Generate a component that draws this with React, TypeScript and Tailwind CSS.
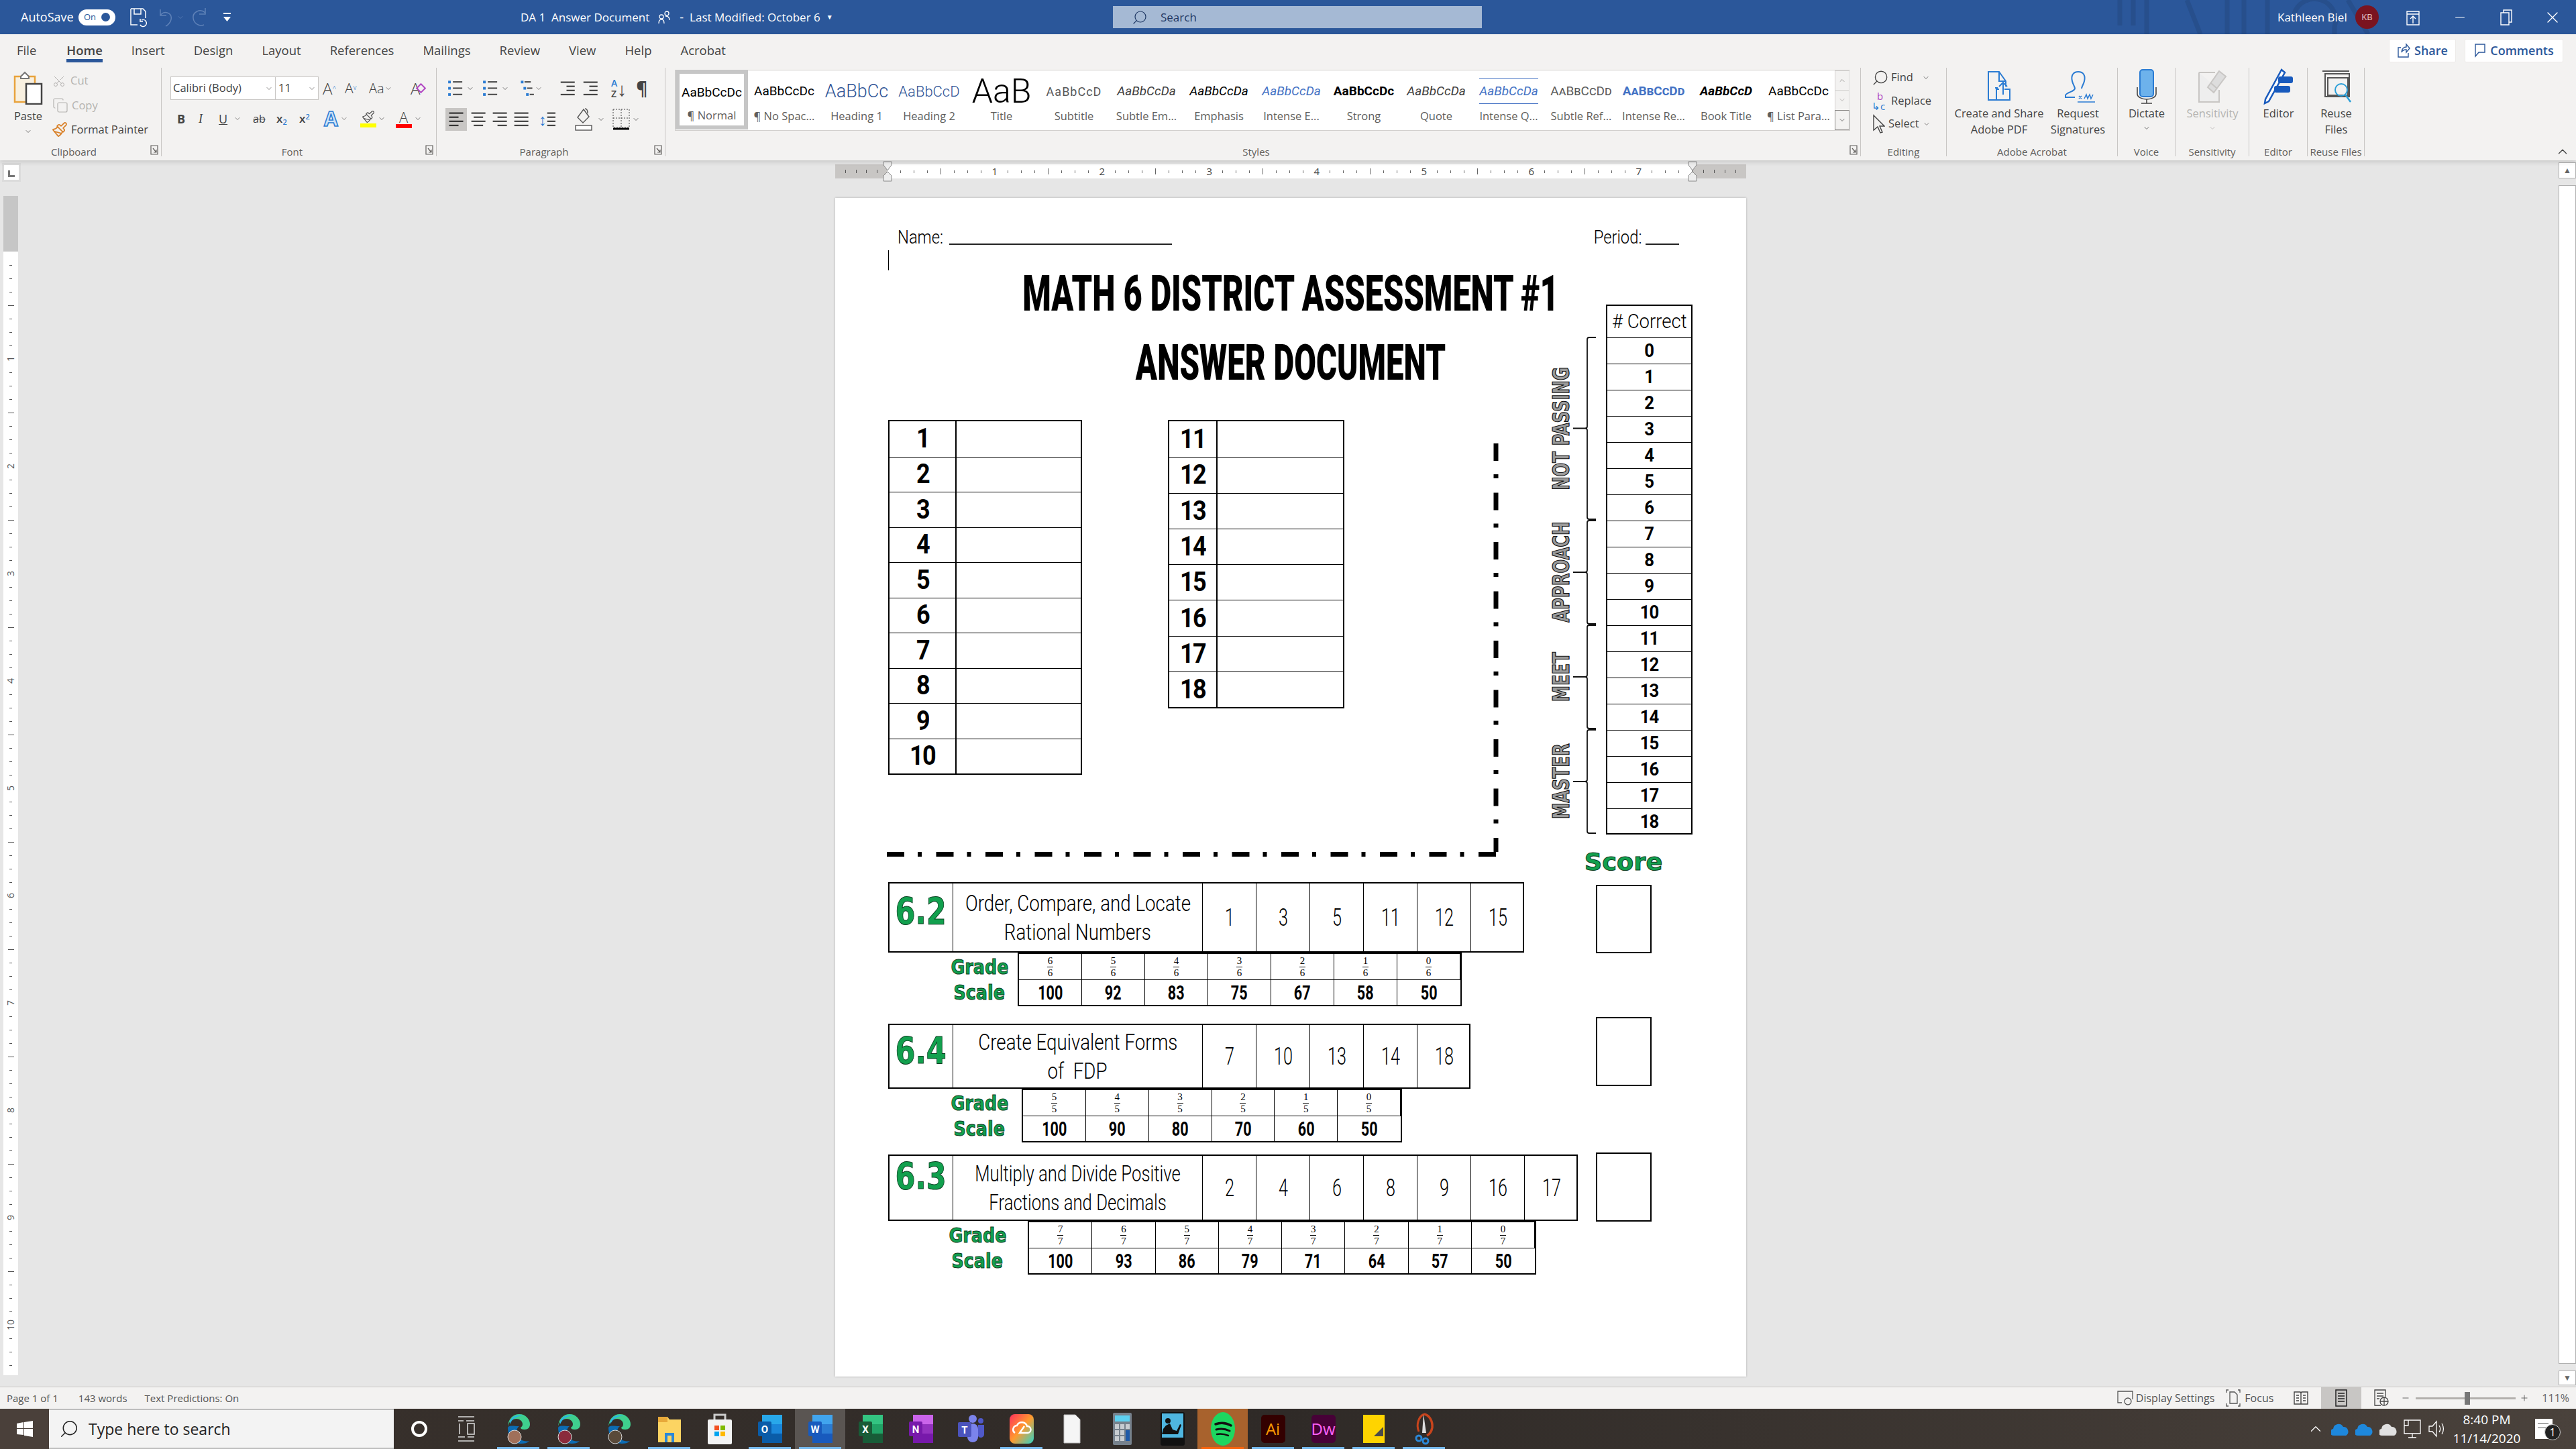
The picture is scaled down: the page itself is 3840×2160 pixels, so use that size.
import React from 'react';
import { ChevronDown, ChevronUp, Search, Scissors, Copy, Paintbrush, Minus, Plus, X } from 'lucide-react';

const Chev = ({ className = 'text-[#605e5c]' }: { className?: string }) => (
  <ChevronDown className={`w-[12px] h-[12px] shrink-0 ${className}`} strokeWidth={1.5} />
);

const Lines = ({ rows, color = '#444' }: { rows: [number, number][]; color?: string }) => (
  <svg width="26" height="28" viewBox="0 0 28 32">
    {rows.map(([x, w], i) => (
      <rect key={i} x={x} y={4 + i * 7} width={w} height="2.5" fill={color} />
    ))}
  </svg>
);

const Bullets = ({ kind }: { kind: 'b' | 'n' | 'm' }) => (
  <svg width="24" height="28" viewBox="0 0 28 36">
    {[3, 15, 27].map((y, i) => (
      <g key={y}>
        <rect x={kind === 'm' ? 3 + i * 5 : 0} y={y} width="5" height="5" fill="#2b7cd3" />
        <rect x={kind === 'm' ? 10 + i * 5 : 9} y={y + 1} width={kind === 'm' ? 12 - i * 2 : 18} height="2.5" fill="#444" />
      </g>
    ))}
  </svg>
);

const Launcher = () => (
  <svg className="absolute right-[3px] bottom-[1px]" width="13" height="17" viewBox="0 0 13 17" fill="none" stroke="#605e5c" strokeWidth="1.2">
    <path d="M1 2h10v13H1zM4 6l5 6M9 8v4H5" />
  </svg>
);

const Group = ({ w, label, launcher, children }: { w: string; label: string; launcher?: boolean; children: React.ReactNode }) => (
  <div className={`${w} relative h-full flex flex-col border-r border-[#c8c6c4] shrink-0`}>
    <div className="flex-1 min-h-0">{children}</div>
    <div className={`h-[20px] leading-[20px] mt-[3px] -mb-[3px] text-center text-[15px] text-[#605e5c] whitespace-nowrap ${launcher ? 'pr-[20px]' : ''}`}>{label}</div>
    {launcher && <Launcher />}
  </div>
);

const BigBtn = ({ w, icon, lines, muted, chev }: { w: string; icon: React.ReactNode; lines: string[]; muted?: boolean; chev?: boolean }) => (
  <div className={`${w} flex flex-col items-center shrink-0 ${muted ? 'text-[#b4b2b0]' : 'text-[#444]'}`}>
    <div className="h-[56px] flex items-center justify-center">{icon}</div>
    {lines.map(l => (
      <div key={l} className="text-[16.5px] leading-[24px] whitespace-nowrap">{l}</div>
    ))}
    {chev && <Chev className="mt-[4px]" />}
  </div>
);

const STYLES: { p: string; l: string; c: string }[] = [
  { p: 'AaBbCcDc', l: '¶ Normal', c: 'text-black text-[19px]' },
  { p: 'AaBbCcDc', l: '¶ No Spac...', c: 'text-black text-[19px]' },
  { p: 'AaBbCc', l: 'Heading 1', c: 'text-[#2f5496] text-[27px] font-light' },
  { p: 'AaBbCcD', l: 'Heading 2', c: 'text-[#2f5496] text-[22px] font-light' },
  { p: 'AaB', l: 'Title', c: 'text-black text-[50px] font-light leading-[60px]' },
  { p: 'AaBbCcD', l: 'Subtitle', c: 'text-[#595959] text-[18px] tracking-[1px]' },
  { p: 'AaBbCcDa', l: 'Subtle Em...', c: 'text-[#404040] text-[19px] italic' },
  { p: 'AaBbCcDa', l: 'Emphasis', c: 'text-black text-[19px] italic' },
  { p: 'AaBbCcDa', l: 'Intense E...', c: 'text-[#4472c4] text-[19px] italic' },
  { p: 'AaBbCcDc', l: 'Strong', c: 'text-black text-[19px] font-bold' },
  { p: 'AaBbCcDa', l: 'Quote', c: 'text-[#404040] text-[19px] italic' },
  { p: 'AaBbCcDa', l: 'Intense Q...', c: 'text-[#4472c4] text-[19px] italic border-y border-[#4472c4] py-[4px]' },
  { p: 'AaBbCcDd', l: 'Subtle Ref...', c: 'text-[#5a5a5a] text-[19px] [font-variant:small-caps]' },
  { p: 'AaBbCcDd', l: 'Intense Re...', c: 'text-[#4472c4] text-[19px] font-bold [font-variant:small-caps]' },
  { p: 'AaBbCcD', l: 'Book Title', c: 'text-black text-[19px] font-bold italic' },
  { p: 'AaBbCcDc', l: '¶ List Para...', c: 'text-black text-[19px]' },
];

const TitleBar = () => (
  <div className="relative h-[51px] bg-[#2b579a] flex items-center text-white text-[18px] overflow-hidden shrink-0">
    <svg className="absolute left-[3150px] top-0" width="400" height="51" viewBox="0 0 400 51" fill="none" stroke="#274f8c" strokeWidth="7">
      <path d="M10 0v38M30 0v38M50 0v51M110 0l20 51M170 0v51M195 0v51M230 0v51M270 20a30 30 0 0 1 60 20v11M350 0l30 51" />
    </svg>
    <span className="ml-[31px] w-[86px]">AutoSave</span>
    <div className="w-[55px] h-[24px] rounded-full bg-white flex items-center justify-between px-[8px] text-[#2b579a] text-[13px]">
      On<span className="w-[13px] h-[13px] rounded-full bg-[#2b579a]" />
    </div>
    <svg className="ml-[21px]" width="26" height="30" viewBox="0 0 26 30" fill="none" stroke="#fff" strokeWidth="1.5">
      <path d="M2 2h18l4 4v10M2 2v24h10M7 2v8h10V2M18 19a5 5 0 1 1-2 7M16 17v4h4" />
    </svg>
    <svg className="ml-[18px]" width="24" height="30" viewBox="0 0 24 30" fill="none" stroke="#5f82b8" strokeWidth="1.5">
      <path d="M2 3v9h9M2 12c6-8 18-4 16 6-1 4-4 8-8 10" />
    </svg>
    <Chev className="ml-[2px] text-[#5f82b8]" />
    <svg className="ml-[9px]" width="28" height="32" viewBox="0 0 28 32" fill="none" stroke="#5f82b8" strokeWidth="1.5">
      <path d="M22 2v9h-9M22 9C14 2 3 8 4 17c1 8 9 13 16 10" />
    </svg>
    <svg className="ml-[20px]" width="13" height="16" viewBox="0 0 13 16" fill="#fff">
      <rect x="1" y="1" width="11" height="2" /><path d="M1 7h11l-5.500 7z" />
    </svg>
    <span className="ml-[431px] whitespace-pre text-[17px]">DA 1  Answer Document</span>
    <svg className="ml-[13px]" width="18" height="22" viewBox="0 0 18 22" fill="none" stroke="#fff" strokeWidth="1.3">
      <circle cx="5" cy="10" r="3" /><circle cx="13" cy="5" r="3" /><path d="M1 20c0-4 2-6 4-6s4 2 4 6M11 9c4 0 6 2 6 6" />
    </svg>
    <span className="ml-[14px]">-</span>
    <span className="ml-[9px] text-[17px]">Last Modified: October 6</span>
    <span className="ml-[9px] text-[10px]">▼</span>
    <div className="absolute left-[1659px] top-[9px] w-[550px] h-[33px] bg-[#a5b9d4] flex items-center text-[#1f3864] text-[17px]">
      <Search className="ml-[28px] w-[24px] h-[24px] -scale-x-100 text-[#1f3864]" strokeWidth={1.2} />
      <span className="ml-[19px]">Search</span>
    </div>
    <div className="absolute left-[3395px] top-0 h-full flex items-center">
      <span className="w-[116px] text-[17px] whitespace-nowrap">Kathleen Biel</span>
      <span className="w-[35px] h-[35px] rounded-full bg-[#7a1420] flex items-center justify-center text-[13px] text-[#e6c5c8]">KB</span>
      <svg className="ml-[40px]" width="22" height="26" viewBox="0 0 22 26" fill="none" stroke="#fff" strokeWidth="1.4">
        <path d="M2 4h18v20H2zM2 8h18M11 22V12M7 15l4-4 4 4" />
      </svg>
      <Minus className="ml-[48px] w-[22px] h-[22px]" strokeWidth={1.2} />
      <svg className="ml-[48px]" width="20" height="28" viewBox="0 0 20 28" fill="none" stroke="#fff" strokeWidth="1.4">
        <path d="M2 7h12v18H2zM6 7V3h12v18h-4" />
      </svg>
      <X className="ml-[45px] w-[28px] h-[28px]" strokeWidth={1.2} />
    </div>
  </div>
);

const TABS = ['File', 'Home', 'Insert', 'Design', 'Layout', 'References', 'Mailings', 'Review', 'View', 'Help', 'Acrobat'];

const Ribbon = () => (
  <div className="relative h-[188px] bg-[#f3f2f1] flex flex-col text-[#444] shrink-0 z-10 shadow-[0_3px_6px_rgba(0,0,0,0.12)]">
    <div className="h-[48px] flex items-center pl-[25px] gap-[43px] text-[18.5px] text-[#444]">
      {TABS.map(t => (
        <span key={t} className={`relative whitespace-nowrap ${t === 'Home' ? 'font-semibold ml-[2px]' : ''}`}>
          {t}
          {t === 'Home' && <span className="absolute left-0 right-0 top-[27px] h-[5px] bg-[#2b579a]" />}
        </span>
      ))}
      <div className="ml-auto flex items-center gap-[13px] pr-[19px] text-[#2b579a] text-[18px] font-semibold">
        <div className="w-[100px] h-[35px] bg-white rounded-[2px] border border-[#edebe9] flex items-center justify-center gap-[6px]">
          <svg width="20" height="24" viewBox="0 0 20 24" fill="none" stroke="#2b579a" strokeWidth="1.4"><path d="M6 8H2v14h15v-6M7 15c0-6 4-8 7-8V3l5 6-5 6v-4c-3 0-6 1-7 4z" /></svg>
          Share
        </div>
        <div className="w-[147px] h-[35px] bg-white rounded-[2px] border border-[#edebe9] flex items-center justify-center gap-[6px]">
          <svg width="18" height="24" viewBox="0 0 18 24" fill="none" stroke="#2b579a" strokeWidth="1.4"><path d="M2 3h14v12H7l-5 6z" /></svg>
          Comments
        </div>
      </div>
    </div>
    <div className="h-[134px] pt-[2px] flex">
      <Group w="w-[241px]" label="Clipboard" launcher>
        <div className="flex h-full">
          <div className="w-[78px] flex flex-col items-center pl-[6px]">
            <svg className="mt-[5px]" width="46" height="50" viewBox="0 0 46 50" fill="none">
              <path d="M3 8h30v38H3z" stroke="#e8a33d" strokeWidth="2.500" fill="#f8f0e0" />
              <path d="M12 8l6-6 6 6v3H12z" stroke="#777" strokeWidth="2" fill="#fff" />
              <rect x="20" y="19" width="23" height="30" fill="#fff" stroke="#444" strokeWidth="2.500" />
            </svg>
            <span className="text-[16.5px] leading-[22px] mt-[6px]">Paste</span>
            <Chev className="mt-[6px]" />
          </div>
          <div className="flex flex-col text-[16.5px] whitespace-nowrap">
            <div className="h-[37px] mt-[1px] flex items-center gap-[7px] text-[#b4b2b0]"><Scissors className="w-[20px] h-[26px] -rotate-90" strokeWidth={1.2} />Cut</div>
            <div className="h-[36px] flex items-center gap-[5px] text-[#b4b2b0]"><Copy className="w-[24px] h-[26px]" strokeWidth={1.2} />Copy</div>
            <div className="h-[36px] flex items-center gap-[5px] -ml-[1px]"><Paintbrush className="w-[24px] h-[28px] text-[#d9822b]" strokeWidth={1.8} />Format Painter</div>
          </div>
        </div>
      </Group>
      <Group w="w-[410px]" label="Font" launcher>
        <div className="pl-[13px] pt-[13px]">
          <div className="flex items-center h-[35px]">
            <div className="w-[157px] h-[35px] bg-white border border-[#c8c6c4] flex items-center justify-between pl-[3px] pr-[3px] text-[16.5px] whitespace-nowrap">Calibri (Body)<Chev /></div>
            <div className="w-[64px] h-[35px] bg-white border border-l-0 border-[#c8c6c4] flex items-center justify-between pl-[4px] pr-[3px] text-[16.5px]">11<Chev /></div>
            <span className="ml-[6px] w-[33px] text-[24px] font-light">A<sup className="text-[10px] text-[#2b7cd3]">^</sup></span>
            <span className="w-[36px] text-[21px] font-light">A<sup className="text-[10px] text-[#2b7cd3]">v</sup></span>
            <span className="w-[38px] text-[20px] font-light flex items-center">Aa<Chev /></span>
            <span className="ml-[24px] text-[24px] font-light relative">A<span className="absolute left-[10px] top-[12px] w-[11px] h-[11px] rotate-45 border-2 border-[#b146c2]" /></span>
          </div>
          <div className="flex items-center h-[36px] mt-[10px] text-[18px]">
            <span className="ml-[10px] w-[32px] font-bold">B</span>
            <span className="w-[30px] italic [font-family:'Liberation_Serif',serif]">I</span>
            <span className="w-[22px] underline">U</span>
            <Chev />
            <span className="ml-[17px] w-[35px] line-through text-[16px]">ab</span>
            <span className="w-[34px] text-[17px] font-semibold">x<sub className="text-[11px] text-[#2b7cd3]">2</sub></span>
            <span className="w-[37px] text-[17px] font-semibold">x<sup className="text-[11px] text-[#2b7cd3]">2</sup></span>
            <span className="text-[30px] leading-[30px] font-bold text-[#cfe4f7] [-webkit-text-stroke:1.5px_#2b7cd3]">A</span>
            <Chev className="ml-[3px] text-[#605e5c]" />
            <div className="ml-[18px] w-[24px] flex flex-col items-center">
              <Paintbrush className="w-[20px] h-[20px] text-[#555]" strokeWidth={1.5} />
              <span className="w-[24px] h-[6px] bg-[#ffff00]" />
            </div>
            <Chev className="ml-[2px]" />
            <div className="ml-[15px] w-[24px] flex flex-col items-center leading-[22px]">
              <span className="text-[22px] font-light">A</span>
              <span className="w-[24px] h-[6px] bg-[#f00]" />
            </div>
            <Chev className="ml-[3px]" />
          </div>
        </div>
      </Group>
      <Group w="w-[341px]" label="Paragraph" launcher>
        <div className="pl-[16px] pt-[13px]">
          <div className="flex items-center h-[36px]">
            <Bullets kind="b" /><Chev className="ml-[4px]" />
            <span className="ml-[12px]"><Bullets kind="n" /></span><Chev className="ml-[4px]" />
            <span className="ml-[14px]"><Bullets kind="m" /></span><Chev />
            <span className="ml-[26px]"><Lines rows={[[0, 24], [10, 14], [10, 14], [0, 24]]} /></span>
            <span className="ml-[8px]"><Lines rows={[[0, 24], [10, 14], [10, 14], [0, 24]]} /></span>
            <span className="ml-[16px] text-[14px] leading-[16px] text-[#2b7cd3] font-semibold">A<br /><span className="text-[#444]">Z</span></span>
            <span className="text-[28px] font-light leading-[28px]">↓</span>
            <span className="ml-[14px] text-[26px] font-bold leading-[28px]">¶</span>
          </div>
          <div className="flex items-center h-[36px] mt-[10px] -ml-[3px]">
            <span className="w-[32px] h-[34px] bg-[#c8c6c4] flex items-center justify-center"><Lines rows={[[2, 24], [2, 16], [2, 24], [2, 16]]} color="#333" /></span>
            <span className="ml-[5px]"><Lines rows={[[1, 24], [5, 16], [1, 24], [5, 16]]} /></span>
            <span className="ml-[6px]"><Lines rows={[[1, 24], [9, 16], [1, 24], [9, 16]]} /></span>
            <span className="ml-[6px]"><Lines rows={[[1, 24], [1, 24], [1, 24], [1, 24]]} /></span>
            <span className="ml-[12px] flex items-center"><span className="text-[#2b7cd3] text-[24px] font-light leading-[30px]">↕</span><Lines rows={[[0, 14], [0, 14], [0, 14], [0, 14]]} /></span>
            <svg className="ml-[15px]" width="28" height="36" viewBox="0 0 28 36" fill="none" stroke="#555" strokeWidth="1.4">
              <path d="M14 3L5 15l8 8 9-9zM16 2c3 0 4 3 4 7" /><rect x="2" y="27" width="24" height="7" fill="#fff" />
            </svg>
            <Chev className="ml-[6px]" />
            <svg className="ml-[10px]" width="28" height="36" viewBox="0 0 28 36" fill="none" stroke="#444" strokeWidth="1" strokeDasharray="2 2">
              <path d="M2 3h24v27H2zM14 3v27M2 16h24" /><path d="M2 32h24" strokeDasharray="0" strokeWidth="3" stroke="#000" />
            </svg>
            <Chev className="ml-[2px]" />
          </div>
        </div>
      </Group>
      <Group w="w-[1782px]" label="Styles" launcher>
        <div className="pl-[14px] pt-[3px]">
          <div className="flex w-[1752px] h-[91px] bg-white border-y border-l border-[#d2d0ce]">
            {STYLES.map((s, i) => (
              <div key={s.l} className={`w-[108px] shrink-0 h-full flex flex-col items-center overflow-hidden ${i === 0 ? 'border-[6px] border-[#c6c6c6] -mt-[1px] h-[91px]' : ''}`}>
                <div className={`w-[96px] flex items-center justify-center overflow-hidden whitespace-nowrap [font-family:'Roboto',sans-serif] ${i === 0 ? 'h-[50px] pt-[6px]' : 'h-[56px] pt-[6px]'}`}>
                  <span className={s.c}>{s.p}</span>
                </div>
                <span className="text-[16.5px] text-[#605e5c] whitespace-nowrap">{s.l}</span>
              </div>
            ))}
            <div className="w-[22px] flex flex-col text-[#a19f9d] text-[10px] bg-[#f3f2f1]">
              <div className="flex-1 flex items-center justify-center border border-[#d2d0ce]"><ChevronUp className="w-[12px] h-[12px]" /></div>
              <div className="flex-1 flex items-center justify-center border-x border-[#d2d0ce]"><Chev className="text-[#a19f9d]" /></div>
              <div className="flex-1 flex items-center justify-center border border-[#8a8886] text-[#444]"><Chev className="text-[#444]" /></div>
            </div>
          </div>
        </div>
      </Group>
      <Group w="w-[128px]" label="Editing">
        <div className="flex flex-col pl-[16px] -mt-[3px] text-[16.5px] whitespace-nowrap">
          <div className="h-[35px] flex items-center gap-[3px]"><Search className="w-[26px] h-[32px] -scale-x-100" strokeWidth={1.2} />Find<Chev className="ml-[10px]" /></div>
          <div className="h-[35px] flex items-center gap-[5px]"><span className="w-[24px] text-[15px] leading-[15px] text-[#2b7cd3]"><span className="text-[#b146c2] pl-[8px]">b</span><br />↳c</span>Replace</div>
          <div className="h-[33px] flex items-center gap-[5px]">
            <svg width="20" height="30" viewBox="0 0 20 30" fill="none" stroke="#444" strokeWidth="1.4"><path d="M3 2v22l6-5 4 9 3-1-4-9h7z" /></svg>
            Select<Chev />
          </div>
        </div>
      </Group>
      <Group w="w-[255px]" label="Adobe Acrobat">
        <div className="flex pl-[8px]">
          <BigBtn w="w-[140px]" lines={['Create and Share', 'Adobe PDF']} icon={
            <svg width="36" height="48" viewBox="0 0 36 48" fill="none" stroke="#2b7cd3" strokeWidth="2"><path d="M14 44H2V2h16l10 14v8M18 2v14h10M12 26h4M24 36V18M18 24l6-6 6 6M26 28h8v16H14V28h4" /></svg>
          } />
          <BigBtn w="w-[95px]" lines={['Request', 'Signatures']} icon={
            <svg width="50" height="48" viewBox="0 0 50 48" fill="none" stroke="#2b7cd3" strokeWidth="2"><path d="M25 2c-8 0-11 6-9 14 1 5 4 8 4 11-1 5-12 5-14 10v3h14M25 2c8 0 11 6 9 14-1 5-4 8-4 11" /><path d="M26 38l4 4m0-4l-4 4M34 42l3-6 2 6 3-6 2 6 3-6M24 47h26" strokeWidth="1.5" /></svg>
          } />
        </div>
      </Group>
      <Group w="w-[86px]" label="Voice">
        <BigBtn w="w-[86px]" chev lines={['Dictate']} icon={
          <svg width="30" height="54" viewBox="0 0 30 54" fill="none" stroke="#444" strokeWidth="1.6"><rect x="5" y="2" width="20" height="40" rx="4" fill="#6db2ec" stroke="#2b7cd3" strokeWidth="2" /><path d="M1 28v10a14 8 0 0 0 28 0V28M15 46v6M7 52h16" /></svg>
        } />
      </Group>
      <Group w="w-[110px]" label="Sensitivity">
        <BigBtn w="w-[110px]" muted chev lines={['Sensitivity']} icon={
          <svg width="44" height="50" viewBox="0 0 44 50" fill="none" stroke="#c8c6c4" strokeWidth="2"><path d="M2 4h24M2 4v44h30V30" fill="#eee" /><path d="M32 2l10 8-18 24-9-8zM20 20l9 8" fill="#ddd" /></svg>
        } />
      </Group>
      <Group w="w-[87px]" label="Editor">
        <BigBtn w="w-[87px]" lines={['Editor']} icon={
          <svg width="46" height="54" viewBox="0 0 46 54" fill="none"><path d="M27 2L3 46l-1 6 6-3L32 6z" stroke="#185abd" strokeWidth="2.500" fill="#fff" /><rect x="22" y="12" width="22" height="10" rx="3" fill="#185abd" /><rect x="16" y="26" width="24" height="10" rx="3" fill="#185abd" /></svg>
        } />
      </Group>
      <Group w="w-[85px]" label="Reuse Files">
        <BigBtn w="w-[85px]" lines={['Reuse', 'Files']} icon={
          <svg width="46" height="50" viewBox="0 0 46 50" fill="none" stroke="#555" strokeWidth="2"><path d="M2 2h40M6 6h36v34H6zM10 12h30v26H10z" /><circle cx="30" cy="30" r="9" stroke="#2b9fd8" /><path d="M36 37l8 11" stroke="#2b9fd8" strokeWidth="2.500" /></svg>
        } />
      </Group>
    </div>
    <ChevronUp className="absolute right-[9px] bottom-[2px] w-[22px] h-[22px] text-[#444]" strokeWidth={1.5} />
  </div>
);

const RulerMark = ({ left }: { left: string }) => (
  <svg className={`absolute ${left} -top-[5px]`} width="14" height="32" viewBox="0 0 14 32" fill="#eee" stroke="#888" strokeWidth="1">
    <path d="M1 1h12v5L7 14 1 6zM7 16l6 6v8H1v-8z" />
  </svg>
);

const HRuler = () => (
  <div className="relative flex ml-[1245px] w-[1358px] h-[21px] mt-[6px] bg-[#c8c6c4] text-[#444] text-[15px]">
    <div className="w-[78px] flex items-center justify-around px-[8px]">
      {[0, 1, 2, 3].map(i => <span key={i} className="w-[1px] h-[5px] bg-[#555]" />)}
    </div>
    <div className="w-[1200px] bg-white flex items-center">
      {Array.from({ length: 60 }).map((_, i) => {
        const n = i + 1;
        return (
          <div key={i} className="w-[20px] flex justify-end items-center">
            {n % 8 === 0 && n < 60 ? <span className="translate-x-[4px] leading-none">{n / 8}</span>
              : n % 4 === 0 ? <span className="w-[1px] h-[9px] bg-[#666]" />
              : <span className="w-[1px] h-[4px] bg-[#666]" />}
          </div>
        );
      })}
    </div>
    <div className="w-[80px] flex items-center justify-around px-[8px]">
      {[0, 1, 2, 3].map(i => <span key={i} className="w-[1px] h-[5px] bg-[#555]" />)}
    </div>
    <RulerMark left="left-[71px]" />
    <RulerMark left="left-[1271px]" />
  </div>
);

const VRuler = () => (
  <div className="w-[22px] ml-[5px] mt-[22px] h-[1758px] flex flex-col shrink-0">
    <div className="h-[83px] bg-[#c6c6c6] shrink-0" />
    <div className="flex-1 bg-white flex flex-col items-center overflow-hidden text-[14px] text-[#555] pt-[10px]">
      {Array.from({ length: 84 }).map((_, i) => {
        const n = i + 1;
        return (
          <div key={i} className="h-[20px] shrink-0 flex items-center justify-center">
            {n % 8 === 0 ? <span className="-rotate-90 leading-none">{n / 8}</span>
              : n % 4 === 0 ? <span className="w-[9px] h-[1px] bg-[#555]" />
              : <span className="w-[4px] h-[1px] bg-[#555]" />}
          </div>
        );
      })}
    </div>
  </div>
);

const BOLD = "[font-family:'Roboto',sans-serif] font-bold text-black";
const THIN = "[font-family:'Roboto',sans-serif] font-light text-black";

const AnswerTable = ({ from, to, col, w, rowH }: { from: number; to: number; col: string; w: string; rowH: string }) => (
  <div className={`${w} border-2 border-black shrink-0`}>
    {Array.from({ length: to - from + 1 }).map((_, i) => (
      <div key={i} className={`${rowH} flex ${i ? 'border-t border-black' : ''}`}>
        <div className={`${col} shrink-0 border-r-2 border-black flex items-center justify-center ${BOLD} text-[40px]`}>
          <span className="inline-block scale-x-[0.9] tracking-[-2px]">{from + i}</span>
        </div>
        <div className="flex-1" />
      </div>
    ))}
  </div>
);

const GROUPS = [
  { label: 'NOT PASSING', h: 'h-[273px]', bh: 273 },
  { label: 'APPROACH', h: 'h-[156px]', bh: 156 },
  { label: 'MEET', h: 'h-[156px]', bh: 156 },
  { label: 'MASTER', h: 'h-[156px]', bh: 156 },
];

const CorrectChart = () => (
  <div className="flex justify-end">
    <div className="flex flex-col pt-[48px]">
      {GROUPS.map(g => (
        <div key={g.label} className={`${g.h} flex items-center`}>
          <span className="[writing-mode:vertical-rl] rotate-180 [font-family:'DejaVu_Sans',sans-serif] font-bold text-[#9a9a9a] [-webkit-text-stroke:1.2px_#111] text-[33px] font-stretch-condensed scale-y-[0.82] whitespace-nowrap w-[33px] leading-[33px]">{g.label}</span>
          <svg width="36" height={g.bh} viewBox={`0 0 36 ${g.bh}`} fill="none" stroke="#111" strokeWidth="1.8">
            <path d={`M35 1H25q-3 0-3 3V${g.bh / 2 - 3}q0 3-3 3H1h18q3 0 3 3V${g.bh - 4}q0 3 3 3H35`} />
          </svg>
        </div>
      ))}
    </div>
    <div className="ml-[14px] w-[129px] border-2 border-black h-[790px]">
      <div className="h-[47px] flex items-center justify-center text-[29px] [font-family:'Roboto',sans-serif] font-light text-black whitespace-nowrap">
        <span className="inline-block scale-x-[0.95]"># Correct</span>
      </div>
      {Array.from({ length: 19 }).map((_, i) => (
        <div key={i} className={`h-[39px] border-t border-black flex items-center justify-center ${BOLD} text-[27px]`}>
          <span className="inline-block scale-x-[0.95] tracking-[-1px]">{i}</span>
        </div>
      ))}
    </div>
  </div>
);

const GREEN = "[font-family:'DejaVu_Sans',sans-serif] font-bold text-[#12a04e] [-webkit-text-stroke:1px_#0a3d20]";

type Sec = {
  code: string; t1: string; t2: string; cells: number[]; rowW: string; rowH: string; boxMt: string; pt: string; codePt: string; titleScale: string;
  den: number; scale: number[]; gradeW: string; gridCols: string; labelMl: string; tableMl: string; sectionMt: string; boxH: string;
};

const SECTIONS: Sec[] = [
  { code: '6.2', t1: 'Order, Compare, and Locate', t2: 'Rational Numbers', cells: [1, 3, 5, 11, 12, 15], rowW: 'w-[948px]', rowH: 'h-[105px]', pt: 'pt-0', codePt: 'pt-[13px]', titleScale: 'scale-x-[0.84]', boxMt: 'mt-[4px]', den: 6, scale: [100, 92, 83, 75, 67, 58, 50], gradeW: 'w-[662px]', gridCols: 'grid-cols-7', labelMl: 'ml-[76px]', tableMl: '-ml-[3px]', sectionMt: 'mt-0', boxH: 'h-[102px]' },
  { code: '6.4', t1: 'Create Equivalent Forms', t2: 'of  FDP', cells: [7, 10, 13, 14, 18], rowW: 'w-[868px]', rowH: 'h-[97px]', pt: 'pt-[10px]', codePt: 'pt-[10px]', titleScale: 'scale-x-[0.84]', boxMt: 'mt-0', den: 5, scale: [100, 90, 80, 70, 60, 50], gradeW: 'w-[567px]', gridCols: 'grid-cols-6', labelMl: 'ml-[76px]', tableMl: 'ml-[3px]', sectionMt: 'mt-[16px]', boxH: 'h-[103px]' },
  { code: '6.3', t1: 'Multiply and Divide Positive', t2: 'Fractions and Decimals', cells: [2, 4, 6, 8, 9, 16, 17], rowW: 'w-[1028px]', rowH: 'h-[99px]', pt: 'pt-[3px]', codePt: 'pt-[2px]', titleScale: 'scale-x-[0.78]', boxMt: 'mt-0', den: 7, scale: [100, 93, 86, 79, 71, 64, 57, 50], gradeW: 'w-[758px]', gridCols: 'grid-cols-8', labelMl: 'ml-[73px]', tableMl: 'ml-[15px]', sectionMt: 'mt-[15px]', boxH: 'h-[103px]' },
];

const Section = ({ s }: { s: Sec }) => (
  <div className={`flex ${s.sectionMt}`}>
    <div className={`w-[1055px] shrink-0 ${s.pt}`}>
      <div className={`${s.rowW} ${s.rowH} flex border-2 border-black`}>
        <div className={`w-[95px] shrink-0 border-r border-black flex justify-center ${s.codePt} ${GREEN} text-[56px] leading-[56px]`}>
          <span className="inline-block scale-x-[0.77] whitespace-nowrap">{s.code}</span>
        </div>
        <div className={`w-[371px] shrink-0 flex flex-col items-center justify-center ${THIN} text-[33px] leading-[43px] whitespace-pre`}>
          <span className={`inline-block ${s.titleScale}`}>{s.t1}</span>
          <span className={`inline-block ${s.titleScale}`}>{s.t2}</span>
        </div>
        {s.cells.map(c => (
          <div key={c} className={`w-[80px] shrink-0 border-l border-black flex items-center justify-center ${THIN} text-[36px]`}>
            <span className="inline-block scale-x-[0.7]">{c}</span>
          </div>
        ))}
      </div>
      <div className="flex">
        <div className={`${s.labelMl} w-[120px] shrink-0 flex flex-col items-center ${GREEN} text-[31px] pt-[2px]`}>
          <span className="h-[38px] leading-[38px] inline-block scale-x-[0.82]">Grade</span>
          <span className="h-[39px] leading-[39px] inline-block scale-x-[0.82]">Scale</span>
        </div>
        <div className={`${s.tableMl} ${s.gradeW} grid ${s.gridCols} border-2 border-black`}>
          {s.scale.map((_, i) => {
            const num = s.den - i;
            return (
              <div key={i} className="h-[38px] border-r border-black last:border-r-0 flex flex-col items-center justify-center [font-family:'Liberation_Serif',serif] text-[15px] leading-[15px] text-black">
                <span>{num}</span>
                <span className="w-[9px] h-[1px] bg-black my-[1px]" />
                <span>{s.den}</span>
              </div>
            );
          })}
          {s.scale.map((v, i) => (
            <div key={v} className={`h-[38px] border-t border-black ${i < s.scale.length - 1 ? 'border-r' : ''} flex items-center justify-center ${BOLD} text-[30px]`}>
              <span className="inline-block scale-x-[0.72]">{v}</span>
            </div>
          ))}
        </div>
      </div>
    </div>
    <div className={`w-[83px] ${s.boxH} ${s.boxMt} border-2 border-black shrink-0`} />
  </div>
);

const VDash = () => (
  <svg width="8" height="609" viewBox="0 0 8 609">
    <line x1="4" y1="0" x2="4" y2="609" stroke="#000" strokeWidth="7" strokeDasharray="26 20 6 21.5" />
  </svg>
);

const HDash = () => (
  <svg className="-ml-[2px] block" width="912" height="7" viewBox="0 0 912 7">
    <line x1="0" y1="3.500" x2="912" y2="3.500" stroke="#000" strokeWidth="7" strokeDasharray="26 20 6 21.5" />
  </svg>
);

const Page = () => (
  <div className="ml-[1245px] mt-[29px] w-[1358px] h-[1757px] bg-white pl-[79px] pr-[80px] pt-[40px] shadow-[0_0_3px_rgba(0,0,0,0.25)] [font-family:'Roboto',sans-serif] text-black">
    <div className="flex justify-between h-[38px] text-[27px] font-light pl-[14px] pr-[20px]">
      <div className="flex items-end whitespace-nowrap">
        <span className="inline-block origin-left scale-x-[0.88] leading-[38px]">Name:</span>
        <span className="w-[332px] h-[2px] bg-[#222] mb-[8px]" />
      </div>
      <div className="flex items-end whitespace-nowrap">
        <span className="inline-block origin-right scale-x-[0.88] leading-[38px]">Period:</span>
        <span className="w-[50px] h-[2px] bg-[#222] mb-[8px] ml-[6px]" />
      </div>
    </div>
    <div className="flex h-[942px]">
      <div className="w-[966px] shrink-0">
        <div className="relative w-[1200px] h-[253px] pt-[13px] text-center font-black text-[75px] leading-[103px] whitespace-nowrap">
          <span className="absolute left-0 top-0 w-[1px] h-[30px] bg-black" />
          <div className="w-[1400px] -ml-[100px] scale-x-[0.648]">MATH 6 DISTRICT ASSESSMENT #1</div>
          <div className="w-[1400px] -ml-[100px] scale-x-[0.632]">ANSWER DOCUMENT</div>
        </div>
        <div className="flex items-start h-[644px]">
          <AnswerTable from={1} to={10} w="w-[289px]" col="w-[100px]" rowH="h-[52.500px]" />
          <div className="ml-[128px]">
            <AnswerTable from={11} to={18} w="w-[263px]" col="w-[72px]" rowH="h-[53.300px]" />
          </div>
          <div className="ml-[222px] mt-[35px]"><VDash /></div>
        </div>
        <HDash />
      </div>
      <div className="flex-1 flex flex-col pt-[81px]">
        <CorrectChart />
        <div className={`mt-[23px] ml-[73px] w-[114px] flex justify-center ${GREEN} text-[36px] leading-[36px]`}>
          <span className="inline-block scale-x-[1.02]">Score</span>
        </div>
      </div>
    </div>
    {SECTIONS.map(s => <Section key={s.code} s={s} />)}
  </div>
);

const Scrollbar = () => (
  <div className="absolute right-0 top-[3px] bottom-[2px] w-[26px] flex flex-col text-[#666]">
    <div className="h-[24px] bg-white border border-[#b0b0b0] flex items-center justify-center text-[12px]">▲</div>
    <div className="h-[10px]" />
    <div className="flex-1 bg-white border border-[#b0b0b0]" />
    <div className="h-[10px]" />
    <div className="h-[22px] bg-white border border-[#b0b0b0] flex items-center justify-center text-[12px]">▼</div>
  </div>
);

function VRulerSpacer() {
  return (
    <div className="relative z-10 pt-[31px]">
      <VRuler />
    </div>
  );
}

const Document = () => (
  <div className="relative flex-1 min-h-0 bg-[#e6e6e6] overflow-hidden">
    <div className="absolute left-[3px] top-[4px] w-[28px] h-[28px] bg-white border-[3px] border-[#dcdcdc] flex items-end justify-center pb-[4px]">
      <span className="w-[10px] h-[10px] border-l-[3px] border-b-[3px] border-[#777]" />
    </div>
    <div className="flex">
      <div className="w-[27px] shrink-0"><VRulerSpacer /></div>
      <div className="flex-1 -ml-[27px]">
        <HRuler />
        <Page />
      </div>
    </div>
    <Scrollbar />
  </div>
);

const StatusBar = () => (
  <div className="h-[33px] bg-[#f3f2f1] border-t border-[#c8c6c4] flex items-center text-[15px] text-[#555] shrink-0 whitespace-nowrap">
    <span className="ml-[10px]">Page 1 of 1</span>
    <span className="ml-[30px]">143 words</span>
    <span className="ml-[26px]">Text Predictions: On</span>
    <div className="ml-auto flex items-center h-full">
      <svg width="26" height="26" viewBox="0 0 26 26" fill="none" stroke="#555" strokeWidth="1.3"><path d="M8 20H2V3h22v12" /><circle cx="17" cy="18" r="5" /></svg>
      <span className="ml-[3px] text-[16px]">Display Settings</span>
      <svg className="ml-[16px]" width="24" height="28" viewBox="0 0 24 28" fill="none" stroke="#555" strokeWidth="1.3"><path d="M5 2H2v4M19 2h3v4M5 26H2v-4M19 26h3v-4M7 5h7l4 4v13H7z" /></svg>
      <span className="ml-[5px] text-[16px]">Focus</span>
      <svg className="ml-[30px]" width="22" height="24" viewBox="0 0 22 24" fill="none" stroke="#444" strokeWidth="1.4"><path d="M1 3h9l1 2 1-2h9v18H1zM11 5v16M4 8h4M4 12h4M4 16h4M14 8h4M14 12h4M14 16h4" /></svg>
      <div className="ml-[19px] w-[60px] h-full bg-[#c8c6c4] flex items-center justify-center">
        <svg width="18" height="26" viewBox="0 0 18 26" fill="none" stroke="#222" strokeWidth="1.5"><path d="M1 1h16v24H1zM4 6h10M4 10h10M4 14h10M4 18h10" /></svg>
      </div>
      <svg className="ml-[19px]" width="22" height="26" viewBox="0 0 22 26" fill="none" stroke="#444" strokeWidth="1.3"><path d="M10 24H1V1h16v10M4 6h10M4 10h10M4 14h4" /><circle cx="15" cy="18" r="6" /><path d="M9 18h12M15 12v12" /></svg>
      <Minus className="ml-[18px] w-[14px] h-[14px]" strokeWidth={1.5} />
      <div className="ml-[8px] w-[149px] h-[3px] bg-[#b3b0ad] relative">
        <span className="absolute left-[73px] -top-[8px] w-[8px] h-[19px] bg-[#777]" />
      </div>
      <Plus className="ml-[6px] w-[14px] h-[14px]" strokeWidth={1.5} />
      <span className="ml-[19px] mr-[10px] text-[16px] text-[#666]">111%</span>
    </div>
  </div>
);

const Edge = ({ dot }: { dot: string }) => (
  <svg width="36" height="48" viewBox="0 0 36 48">
    <path d="M2 22C2 9 10 2 19 2c10 0 16 8 16 15 0 5-3 8-8 8-4 0-6-1-6-3 2-1 3-3 3-5 0-5-5-8-9-8-7 0-13 6-13 13z" fill="#3fcf8e" />
    <path d="M2 22c0 13 8 24 20 24 5 0 9-1 12-4-8 2-16-2-18-9-2-6 0-11 3-13-8 0-15-2-17 2z" fill="#0c6cb4" />
    <path d="M5 12c4-7 12-10 20-7C17 4 9 8 5 17z" fill="#2ab4e8" />
    <circle cx="12" cy="36" r="10" fill={dot} stroke="#ddd" strokeWidth="1" />
  </svg>
);

const Tile = ({ bg, text, color }: { bg: string; text: string; color: string }) => (
  <span className={`w-[36px] h-[42px] rounded-[5px] flex items-center justify-center text-[24px] ${bg} ${color}`}>{text}</span>
);

const Office = ({ dark, mid, light, letter }: { dark: string; mid: string; light: string; letter: string }) => (
  <svg width="36" height="42" viewBox="0 0 36 42">
    <rect x="6" y="0" width="30" height="14" fill={light} />
    <rect x="6" y="14" width="30" height="14" fill={mid} />
    <rect x="6" y="28" width="30" height="14" fill={dark} />
    <rect x="0" y="10" width="20" height="22" rx="2" fill={dark} />
    <text x="10" y="27" textAnchor="middle" fontSize="15" fontWeight="700" fill="#fff" fontFamily="Roboto">{letter}</text>
  </svg>
);

const TASK_ITEMS: { k: string; icon: React.ReactNode; bar: string; bg?: string }[] = [
  { k: 'edge1', icon: <Edge dot="#a0705a" />, bar: 'bg-[#76b9ed]' },
  { k: 'edge2', icon: <Edge dot="#8a2b3c" />, bar: 'bg-[#76b9ed]' },
  { k: 'edge3', icon: <Edge dot="#5a4a3a" />, bar: '' },
  { k: 'files', bar: 'bg-[#76b9ed]', icon: (
    <svg width="34" height="40" viewBox="0 0 34 40"><path d="M0 2h14l3 4h17v34H0z" fill="#fcd462" /><path d="M0 2h14v8H0z" fill="#e8a93a" /><path d="M10 40V26h14v14h-4V30h-6v10z" fill="#2b88d8" /></svg>
  ) },
  { k: 'store', bar: '', icon: (
    <svg width="36" height="46" viewBox="0 0 36 46"><path d="M10 10V2h16v8" fill="none" stroke="#ccc" strokeWidth="3" /><rect y="9" width="36" height="37" rx="2" fill="#f3f3f3" /><rect x="10" y="18" width="7" height="7" fill="#f25022" /><rect x="19" y="18" width="7" height="7" fill="#7fba00" /><rect x="10" y="27" width="7" height="7" fill="#00a4ef" /><rect x="19" y="27" width="7" height="7" fill="#ffb900" /></svg>
  ) },
  { k: 'outlook', bar: 'bg-[#76b9ed]', icon: <Office dark="#0a5ca8" mid="#1a86d9" light="#28a8ea" letter="O" /> },
  { k: 'word', bar: 'bg-[#76b9ed]', bg: 'bg-[#5a5552]', icon: <Office dark="#185abd" mid="#2b7cd3" light="#41a5ee" letter="W" /> },
  { k: 'excel', bar: '', icon: <Office dark="#185c37" mid="#21a366" light="#33c481" letter="X" /> },
  { k: 'onenote', bar: '', icon: <Office dark="#7719aa" mid="#9332bf" light="#ca64ea" letter="N" /> },
  { k: 'teams', bar: '', icon: (
    <svg width="40" height="44" viewBox="0 0 40 44"><circle cx="22" cy="7" r="6" fill="#7b83eb" /><circle cx="34" cy="10" r="4" fill="#5059c9" /><rect x="14" y="14" width="16" height="28" rx="8" fill="#7b83eb" /><path d="M30 16h9v14a5 5 0 0 1-9 3z" fill="#5059c9" /><rect y="12" width="20" height="22" rx="2" fill="#4b53bc" /><text x="10" y="29" textAnchor="middle" fontSize="15" fontWeight="700" fill="#fff" fontFamily="Roboto">T</text></svg>
  ) },
  { k: 'cc', bar: 'bg-[#76b9ed]', icon: (
    <svg width="36" height="44" viewBox="0 0 36 44">
      <defs><linearGradient id="ccg" x1="0" y1="0" x2="1" y2="1"><stop offset="0" stopColor="#ff2f5c" /><stop offset="0.5" stopColor="#ff9a2e" /><stop offset="1" stopColor="#2bd6c9" /></linearGradient></defs>
      <rect width="36" height="44" rx="8" fill="url(#ccg)" />
      <path d="M8 28a6 6 0 0 1 3-11 8 8 0 0 1 15 1 5 5 0 0 1 1 10H15l7-10" fill="none" stroke="#fff" strokeWidth="2.500" />
    </svg>
  ) },
  { k: 'file', bar: '', icon: (
    <svg width="26" height="44" viewBox="0 0 26 44"><path d="M1 1h17l7 7v35H1z" fill="#f5f5f5" stroke="#bbb" /></svg>
  ) },
  { k: 'calc', bar: '', icon: (
    <svg width="28" height="48" viewBox="0 0 28 48"><rect width="28" height="48" rx="2" fill="#76818c" /><rect x="3" y="4" width="22" height="9" fill="#5dd0f0" />{[17, 26, 35].map(y => [3, 11].map(x => <rect key={`${x}${y}`} x={x} y={y} width="6" height="7" fill="#c7ccd1" />))}<rect x="19" y="17" width="6" height="7" fill="#c7ccd1" /><rect x="19" y="26" width="6" height="16" fill="#1f5aa8" /></svg>
  ) },
  { k: 'kindle', bar: '', icon: (
    <svg width="36" height="50" viewBox="0 0 36 50"><rect width="36" height="50" rx="3" fill="#111" /><rect x="2" y="2" width="32" height="36" fill="#4fb6e0" /><circle cx="11" cy="13" r="4" fill="#111" /><path d="M8 20l6-3 4 9 6 2 5-10 2 1-5 14H2l2-8z" fill="#111" /></svg>
  ) },
  { k: 'spotify', bar: 'bg-[#f7630c]', bg: 'bg-[#a8622d]', icon: (
    <svg width="36" height="50" viewBox="0 0 36 50" fill="none" stroke="#111" strokeLinecap="round"><ellipse cx="18" cy="25" rx="18" ry="25" fill="#1ed760" stroke="none" /><path d="M7 18c8-3 16-2 23 2" strokeWidth="3.500" /><path d="M8 26c7-2 14-1 20 2" strokeWidth="3" /><path d="M9 33c6-1 12 0 17 2" strokeWidth="2.500" /></svg>
  ) },
  { k: 'ai', bar: 'bg-[#76b9ed]', icon: <Tile bg="bg-[#330000]" text="Ai" color="text-[#ff9a00]" /> },
  { k: 'dw', bar: 'bg-[#76b9ed]', icon: <Tile bg="bg-[#470137]" text="Dw" color="text-[#ff61f6]" /> },
  { k: 'sticky', bar: 'bg-[#76b9ed]', icon: (
    <svg width="32" height="42" viewBox="0 0 32 42"><rect width="32" height="42" fill="#ffd400" /><path d="M14 34L30 18v14H16z" fill="#4a4a4a" /></svg>
  ) },
  { k: 'snip', bar: 'bg-[#76b9ed]', icon: (
    <svg width="30" height="48" viewBox="0 0 30 48" fill="none"><path d="M15 2a14 18 0 0 1 12 20c-1 6-4 10-8 12" stroke="#c8441c" strokeWidth="3.500" /><path d="M15 2a14 18 0 0 0-8 26" stroke="#c8441c" strokeWidth="3" /><path d="M14 2l4 28-6 0z" fill="#ddd" /><circle cx="7" cy="38" r="4" stroke="#2b88d8" strokeWidth="3" /><circle cx="17" cy="42" r="4" stroke="#2b88d8" strokeWidth="3" /></svg>
  ) },
];

const Taskbar = () => (
  <div className="h-[60px] shrink-0 flex items-stretch bg-gradient-to-r from-[#3a322d] via-[#2f2a27] to-[#4a423c] text-white">
    <div className="w-[73px] bg-[#4a403a] flex items-center justify-center">
      <svg width="24" height="24" viewBox="0 0 24 24" fill="#fff"><path d="M0 4l10-2v9H0zM11 2l13-2v11H11zM0 12h10v9L0 20zM11 12h13v12l-13-2z" /></svg>
    </div>
    <div className="w-[514px] bg-[#f3f3f3] border-y-2 border-[#bdbdbd] flex items-center text-[#222] text-[23px]">
      <Search className="ml-[15px] w-[30px] h-[34px] -scale-x-100" strokeWidth={1.2} />
      <span className="ml-[14px]">Type here to search</span>
    </div>
    <div className="ml-[26px] w-[70px] flex items-center">
      <span className="w-[24px] h-[24px] rounded-full border-[4px] border-white" />
    </div>
    <div className="w-[56px] flex items-center">
      <svg width="26" height="40" viewBox="0 0 26 40" fill="none" stroke="#ddd" strokeWidth="1.5"><path d="M0 2h24M0 38h24M0 8h8M12 8h12M2 12v16M14 12v16h10V12zM0 32h10M14 32h10" /></svg>
    </div>
    <div className="flex -ml-[4px]">
      {TASK_ITEMS.map(t => (
        <div key={t.k} className={`relative w-[75px] flex items-center justify-center ${t.bg ?? ''}`}>
          {t.icon}
          {t.bar && <span className={`absolute left-[6px] right-[6px] bottom-0 h-[3px] ${t.bar}`} />}
        </div>
      ))}
    </div>
    <div className="ml-auto flex items-center">
      <ChevronUp className="w-[26px] h-[26px]" strokeWidth={1.2} />
      {['#1e88dc', '#1e88dc', '#e0e0e0'].map((c, i) => (
        <svg key={i} className="ml-[10px]" width="26" height="24" viewBox="0 0 26 24" fill={c}><path d="M4 22a5 5 0 0 1-1-10 8 8 0 0 1 15-3 7 7 0 0 1 4 13z" /></svg>
      ))}
      <svg className="ml-[10px]" width="26" height="30" viewBox="0 0 26 30" fill="none" stroke="#fff" strokeWidth="1.300"><path d="M1 2h24v20H1zM1 2h6v8H1zM13 22v6M7 28h12" /></svg>
      <svg className="ml-[10px]" width="26" height="30" viewBox="0 0 26 30" fill="none" stroke="#fff" strokeWidth="1.300"><path d="M2 11h5l6-7v22l-6-7H2zM17 10c2 3 2 7 0 10M21 7c3 5 3 11 0 16" /></svg>
      <div className="ml-[12px] w-[100px] flex flex-col items-center text-[19px] leading-[28px]">
        <span>8:40 PM</span><span>11/14/2020</span>
      </div>
      <div className="relative ml-[22px] mr-[35px] w-[26px] h-[30px] bg-white">
        <span className="absolute left-[4px] top-[6px] w-[16px] h-[8px] border-y border-[#555]" />
        <span className="absolute -right-[12px] top-[8px] w-[24px] h-[24px] rounded-full bg-[#222] border border-[#ccc] flex items-center justify-center text-[16px]">1</span>
      </div>
    </div>
  </div>
);

export default function App() {
  return (
    <div className="w-[3840px] h-[2160px] flex flex-col overflow-hidden [font-family:'Open_Sans',sans-serif] bg-[#e6e6e6]">
      <TitleBar />
      <Ribbon />
      <Document />
      <StatusBar />
      <Taskbar />
    </div>
  );
}
